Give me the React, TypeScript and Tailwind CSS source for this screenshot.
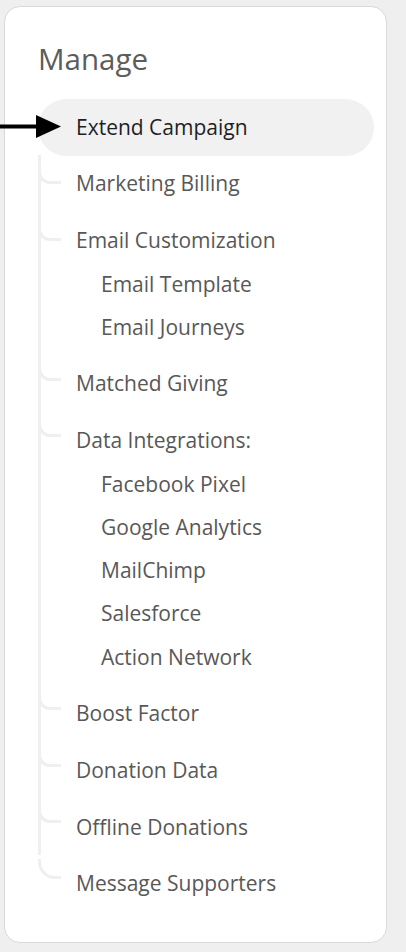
import React from "react";

type Item = { label: string; active?: boolean; off?: number; last?: boolean; subs?: string[] };

const items: Item[] = [
  { label: "Extend Campaign", active: true },
  { label: "Marketing Billing", off: 1.5 },
  { label: "Email Customization", off: 1.5, subs: ["Email Template", "Email Journeys"] },
  { label: "Matched Giving", off: 5 },
  { label: "Data Integrations:", off: 5, subs: ["Facebook Pixel", "Google Analytics", "MailChimp", "Salesforce", "Action Network"] },
  { label: "Boost Factor", off: 5 },
  { label: "Donation Data", off: 5 },
  { label: "Offline Donations", off: 5.5 },
  { label: "Message Supporters", off: 6.5, last: true },
];

function Row({ item }: { item: Item }) {
  return (
    <li className="relative">
      {!item.active && (
        <span
          className={
            item.last
              ? "absolute left-0 w-[23px] h-[20px] border-l-[3px] border-b-[3px] border-[#efefef] rounded-bl-[17px]"
              : "absolute left-0 w-[23px] h-[16px] border-l-[3px] border-b-[3px] border-[#efefef] rounded-bl-[12px]"
          }
          style={{ top: (item.last ? 28.4 - 20 : 28.4 - 16) + 1.5 - (item.off ?? 0) }}
        />
      )}
      <div
        className={
          item.active
            ? "h-[56.75px] flex items-center pl-[38px] rounded-full bg-[#f1f1f1] text-[#1f1f1f] text-[21px]"
            : "h-[56.75px] flex items-center pl-[38px] text-[#585858] text-[21px]"
        }
      >
        {item.label}
      </div>
      {item.subs && (
        <ul className="mt-[-6.5px] mb-[6.5px]">
          {item.subs.map((s) => (
            <li key={s} className="h-[43.25px] flex items-center pl-[63px] text-[#585858] text-[21px]">
              {s}
            </li>
          ))}
        </ul>
      )}
    </li>
  );
}

export default function App() {
  return (
    <div
      className="relative min-h-[952px] w-[406px] bg-[#efefef] pt-[6px] pl-[4px]"
      style={{ fontFamily: '"Open Sans", "Noto Sans", sans-serif' }}
    >
      <div className="w-[383px] h-[937px] bg-white border border-[#d9d9d9] rounded-[16px] pt-[34px] pl-[33px] pr-[12px]">
        <h2 className="text-[29.5px] leading-[36px] text-[#5c5c5c]">Manage</h2>
        <div className="relative mt-[22px]">
          <span className="absolute left-0 top-[56px] w-[3px] h-[700px] bg-[#efefef]" />
          <ul className="relative">
            {items.map((it) => (
              <Row key={it.label} item={it} />
            ))}
          </ul>
        </div>
      </div>
      <svg className="absolute left-0 top-[110px]" width="64" height="34" viewBox="0 0 64 34">
        <line x1="0" y1="16.5" x2="38" y2="16.5" stroke="#000" strokeWidth="4" />
        <polygon points="36,5 61,16.5 36,28" fill="#000" />
      </svg>
    </div>
  );
}
